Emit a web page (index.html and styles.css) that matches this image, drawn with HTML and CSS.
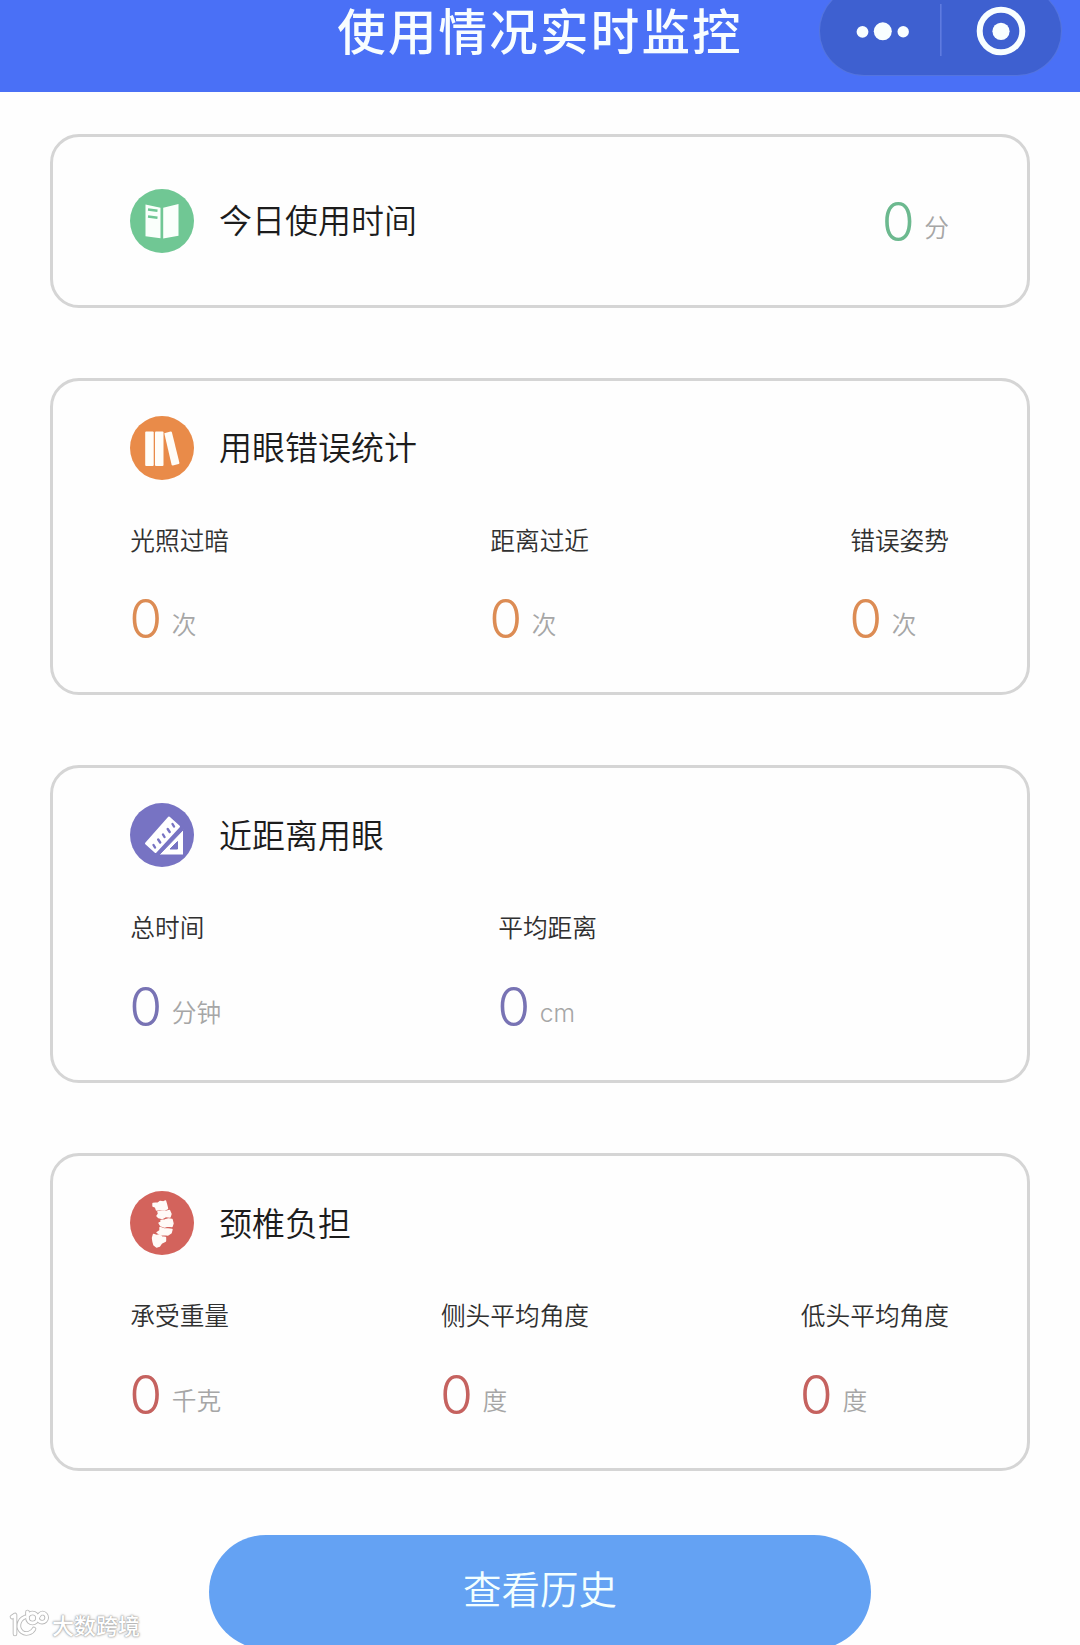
FILE: index.html
```html
<!DOCTYPE html>
<html lang="zh-CN">
<head>
<meta charset="utf-8">
<title>使用情况实时监控</title>
<link rel="stylesheet" href="styles.css">
</head>
<body>
<header class="header">
  <h1 class="header-title">使用情况实时监控</h1>
  <div class="capsule">
    <svg width="241" height="88" viewBox="0 0 241 88">
      <g fill="#f8feff">
        <circle cx="42.5" cy="44.8" r="5.9"/>
        <circle cx="62.8" cy="44.3" r="9"/>
        <circle cx="83.2" cy="44.8" r="5.7"/>
        <circle cx="181" cy="44.3" r="8.6"/>
      </g>
      <path d="M120.8 17v52" stroke="#5f7be0" stroke-width="1.6"/>
      <circle cx="181" cy="44" r="21.3" fill="none" stroke="#f8feff" stroke-width="6"/>
    </svg>
  </div>
</header>

<main class="cards">
  <section class="card card-single green">
    <div class="card-head">
      <svg class="icon" viewBox="0 0 64 64">
        <circle cx="32" cy="32" r="32" fill="#70c794"/>
        <path fill="#fafffb" d="M15.5 15.5l15 3.2v30.6l-15-2zM33.2 18.8l15.3-3.8v31.8l-15.3 2.8z"/>
        <path d="M18 20.5l9.5 1.3M18 27.5l9.5 1.3" stroke="#70c794" stroke-width="2.4"/>
      </svg>
      <h2 class="card-title">今日使用时间</h2>
    </div>
    <div class="value"><span class="num">0</span><span class="unit">分</span></div>
  </section>

  <section class="card orange">
    <div class="card-head">
      <svg class="icon" viewBox="0 0 64 64">
        <circle cx="32" cy="32" r="32" fill="#e98b49"/>
        <g fill="#fffdf8">
          <rect x="15.2" y="15.5" width="8.5" height="34.5" rx="1"/>
          <rect x="25" y="15.5" width="8.5" height="34.5" rx="1"/>
          <path d="M34.3 17.2l6.3-1.7q1-.2 1.3.8l7.5 30.4q.2 1-.8 1.3l-5.7 1.5q-1 .2-1.3-.8z"/>
        </g>
      </svg>
      <h2 class="card-title">用眼错误统计</h2>
    </div>
    <div class="stats">
      <div class="stat"><div class="label">光照过暗</div><div class="value"><span class="num">0</span><span class="unit">次</span></div></div>
      <div class="stat"><div class="label">距离过近</div><div class="value"><span class="num">0</span><span class="unit">次</span></div></div>
      <div class="stat"><div class="label">错误姿势</div><div class="value"><span class="num">0</span><span class="unit">次</span></div></div>
    </div>
  </section>

  <section class="card purple">
    <div class="card-head">
      <svg class="icon" viewBox="0 0 64 64">
        <circle cx="32" cy="32" r="32" fill="#7773c3"/>
        <path fill="#fff" stroke="#fff" stroke-width="2" stroke-linejoin="round" d="M16 40.5L39 14.5l10 9L25.5 49z"/>
        <path d="M23.5 42l1.5 2.500M28.200 36.500l2 3M33 31.500l1.500 2.500M37.700 26l2 3M42.500 21l1.500 2.500" stroke="#7773c3" stroke-width="2.4" stroke-linecap="round"/>
        <path fill="#fff" fill-rule="evenodd" stroke="#7773c3" stroke-width="1" d="M53.5 26.500V52H29zM47.500 38.500v7.500h-7.500z"/>
      </svg>
      <h2 class="card-title">近距离用眼</h2>
    </div>
    <div class="stats stats-pair">
      <div class="stat"><div class="label">总时间</div><div class="value"><span class="num">0</span><span class="unit">分钟</span></div></div>
      <div class="stat"><div class="label">平均距离</div><div class="value"><span class="num">0</span><span class="unit unit-latin">cm</span></div></div>
    </div>
  </section>

  <section class="card red">
    <div class="card-head">
      <svg class="icon" viewBox="0 0 64 64">
        <circle cx="32" cy="32" r="32" fill="#d3635c"/>
        <g fill="#fffaf7" stroke="#fffaf7" stroke-width="1.4" stroke-linejoin="round">
          <path d="M23 12.500l5-.5 2-1.500 3.500.5 2-1 1 3.500 1 4-3 1.500-4-1-4 1-1-3-2.500-1z"/>
          <path d="M28 20.500l4-.5 4 .5 3.500-1 1.500 3.500-1 3-4-.5-3.500 2-4-1-1.500-1.500 1.500-2z"/>
          <path d="M31 29.500l4-.5 3.500-1 3.500.5 1 4-1 3-4.500-.5-3 1-4-1.500-1.500-2.500 2-.5z"/>
          <path d="M30 36.500l4 1.500h4l4 .5-1 3.500-3 2-4-.5-3 .5-4-2.500 3-2z"/>
          <path d="M23.500 43.500l3 1 3-.5 2.500 2 3.500.5v3.500l-4 2-2 3-3 1-2.500-2-1-3.500-.5-3.500z"/>
        </g>
      </svg>
      <h2 class="card-title">颈椎负担</h2>
    </div>
    <div class="stats">
      <div class="stat"><div class="label">承受重量</div><div class="value"><span class="num">0</span><span class="unit">千克</span></div></div>
      <div class="stat"><div class="label">侧头平均角度</div><div class="value"><span class="num">0</span><span class="unit">度</span></div></div>
      <div class="stat"><div class="label">低头平均角度</div><div class="value"><span class="num">0</span><span class="unit">度</span></div></div>
    </div>
  </section>
</main>

<button class="history" type="button">查看历史</button>

<div class="watermark">
  <svg width="42" height="32" viewBox="0 0 42 32" fill="none" stroke-linecap="round" stroke-linejoin="round">
    <g stroke="#b9b9b9" stroke-width="4.6">
      <path d="M4 8l3-2v19M17 8c-7 3-8 11-3 15 4 3 10 1 12-3"/>
      <path d="M19.500 3v6a5 5 0 1 0 5-5c-2 0-3.500 1-5 3M29.500 9c1.500-3 3-5 5-5a4.600 4.600 0 1 1-5 5"/>
    </g>
    <g stroke="#fff" stroke-width="2.8">
      <path d="M4 8l3-2v19M17 8c-7 3-8 11-3 15 4 3 10 1 12-3"/>
      <path d="M19.500 3v6a5 5 0 1 0 5-5c-2 0-3.500 1-5 3M29.500 9c1.500-3 3-5 5-5a4.600 4.600 0 1 1-5 5"/>
    </g>
  </svg>
  <span class="watermark-text">大数跨境</span>
</div>
</body>
</html>
```
FILE: styles.css
```css
* { box-sizing: border-box; }

body {
  position: relative;
  margin: 0;
  height: 1645px;
  overflow: hidden;
  background: #fefefe;
  color: #1c1c1c;
  font-family: "Noto Sans CJK SC", sans-serif;
  font-weight: 350;
}

.header {
  display: grid;
  grid-template-columns: 1fr auto 1fr;
  align-items: start;
  height: 91.5px;
  padding-right: 19px;
  background: #4a70f6;
}

.header-title {
  grid-column: 2;
  margin: 0 0 0 19px;
  color: #f8fdff;
  font-size: 48.5px;
  font-weight: 500;
  line-height: 58px;
  letter-spacing: 2.2px;
  white-space: nowrap;
}

.capsule {
  justify-self: end;
  width: 241px;
  height: 88px;
  margin-top: -13px;
  border-radius: 44px;
  background: #3e60d0;
  box-shadow: 0 0 0 1px #5474de;
}

.capsule svg { display: block; }

.cards {
  display: flex;
  flex-direction: column;
  gap: 70px;
  padding: 42px 50px 0;
}

.card {
  height: 317.8px;
  padding: 35px 77px 0;
  border: 3px solid #d5d5d5;
  border-radius: 29px;
}

.card-single {
  display: flex;
  align-items: center;
  justify-content: space-between;
  height: 174px;
  padding-top: 0;
}

.card-head {
  display: flex;
  align-items: center;
  gap: 25px;
  height: 64px;
}

.icon { width: 64px; height: 64px; }

.card-title {
  margin: 0;
  padding-bottom: 3px;
  font-size: 33px;
  font-weight: 350;
  line-height: 48px;
}

.stats {
  display: flex;
  justify-content: space-between;
  margin-top: 41px;
  padding: 0 1px 0 .3px;
}

.stats-pair {
  justify-content: flex-start;
  gap: 277px;
}

.label {
  color: #303030;
  font-size: 24.7px;
  line-height: 36px;
}

.value {
  display: flex;
  align-items: baseline;
  gap: 9.5px;
}

.card-single .value { padding: 2px 1px 0 0; }

.stat .value { margin-top: 30.5px; }

.num {
  margin-left: -1px;
  font-family: Inter, sans-serif;
  font-size: 53.5px;
  font-weight: 300;
  line-height: 64px;
}

.unit {
  position: relative;
  top: -4px;
  color: #a6a6a6;
  font-size: 24.7px;
  font-weight: 350;
  line-height: 36px;
}

.unit-latin {
  font-family: Inter, sans-serif;
  font-weight: 300;
}

.green .num { color: #6cb98f; }
.orange .num { color: #dc8c54; }
.purple .num { color: #7873b4; }
.red .num { color: #c5625f; }

.history {
  display: block;
  width: 662px;
  height: 114px;
  margin: 64px auto 0;
  padding: 0 0 9px;
  border: 0;
  border-radius: 57px;
  background: #64a2f3;
  color: #f3ffff;
  font-family: inherit;
  font-size: 38.5px;
  font-weight: 350;
}

.watermark {
  position: absolute;
  left: 8px;
  bottom: 4px;
  display: flex;
  align-items: center;
  gap: 2px;
}

.watermark-text {
  padding-bottom: 2px;
  color: #fff;
  font-size: 22px;
  font-weight: 500;
  line-height: 30px;
  text-shadow: 0 0 1px #999, 0 0 2px #aaa, 0 0 3px #bbb;
}
```
